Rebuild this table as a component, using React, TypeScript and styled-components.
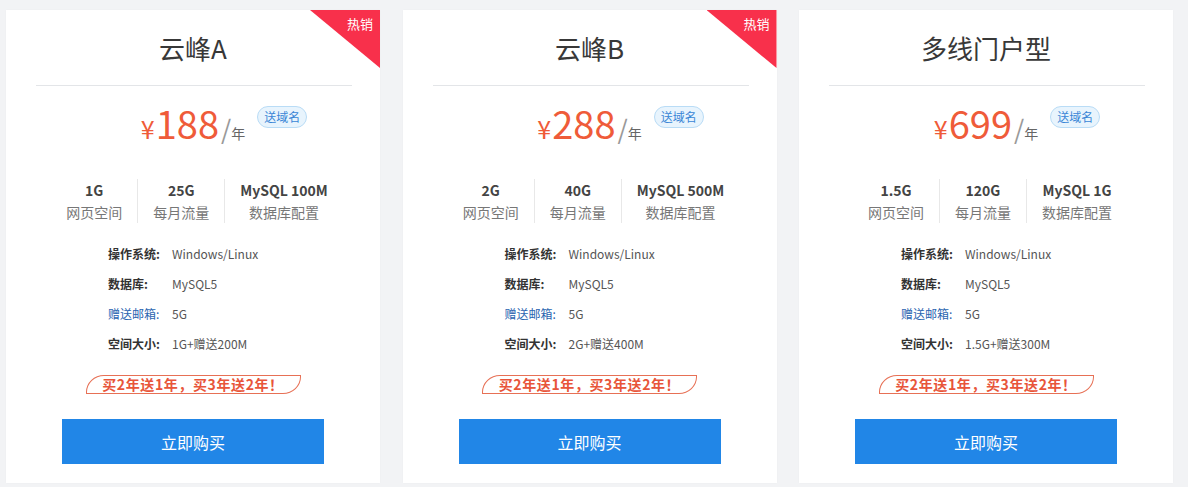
import React from 'react';
import styled, { createGlobalStyle } from 'styled-components';

type Plan = {
  name: string;
  price: string;
  hot?: boolean;
  stats: { value: string; label: string }[];
  specs: { label: string; value: string; highlight?: boolean }[];
};

const plans: Plan[] = [
  {
    name: '云峰A',
    price: '188',
    hot: true,
    stats: [
      { value: '1G', label: '网页空间' },
      { value: '25G', label: '每月流量' },
      { value: 'MySQL 100M', label: '数据库配置' },
    ],
    specs: [
      { label: '操作系统:', value: 'Windows/Linux' },
      { label: '数据库:', value: 'MySQL5' },
      { label: '赠送邮箱:', value: '5G', highlight: true },
      { label: '空间大小:', value: '1G+赠送200M' },
    ],
  },
  {
    name: '云峰B',
    price: '288',
    hot: true,
    stats: [
      { value: '2G', label: '网页空间' },
      { value: '40G', label: '每月流量' },
      { value: 'MySQL 500M', label: '数据库配置' },
    ],
    specs: [
      { label: '操作系统:', value: 'Windows/Linux' },
      { label: '数据库:', value: 'MySQL5' },
      { label: '赠送邮箱:', value: '5G', highlight: true },
      { label: '空间大小:', value: '2G+赠送400M' },
    ],
  },
  {
    name: '多线门户型',
    price: '699',
    stats: [
      { value: '1.5G', label: '网页空间' },
      { value: '120G', label: '每月流量' },
      { value: 'MySQL 1G', label: '数据库配置' },
    ],
    specs: [
      { label: '操作系统:', value: 'Windows/Linux' },
      { label: '数据库:', value: 'MySQL5' },
      { label: '赠送邮箱:', value: '5G', highlight: true },
      { label: '空间大小:', value: '1.5G+赠送300M' },
    ],
  },
];

const App = () => {
  return (
    <>
      <GlobalStyle />
      <StyledPage>
        {plans.map((plan) => (
          <StyledCard key={plan.name}>
            {plan.hot && (
              <StyledRibbon>
                <span>热销</span>
              </StyledRibbon>
            )}
            <StyledTitle>{plan.name}</StyledTitle>
            <StyledDivider />

            <StyledPriceRow>
              <StyledPrice>
                <StyledCurrency>¥</StyledCurrency>
                {plan.price}
                <StyledSlash>/</StyledSlash>
                <StyledUnit>年</StyledUnit>
                <StyledBadge>送域名</StyledBadge>
              </StyledPrice>
            </StyledPriceRow>

            <StyledStats>
              {plan.stats.map((s) => (
                <StyledStat key={s.label}>
                  <StyledStatValue>{s.value}</StyledStatValue>
                  <StyledStatLabel>{s.label}</StyledStatLabel>
                </StyledStat>
              ))}
            </StyledStats>

            <StyledSpecs>
              {plan.specs.map((spec) => (
                <StyledSpecRow key={spec.label}>
                  <StyledSpecLabel $highlight={spec.highlight}>{spec.label}</StyledSpecLabel>
                  <StyledSpecValue>{spec.value}</StyledSpecValue>
                </StyledSpecRow>
              ))}
            </StyledSpecs>

            <StyledPromoWrapper>
              <StyledPromo>买2年送1年，买3年送2年！</StyledPromo>
            </StyledPromoWrapper>

            <StyledBuyButton>立即购买</StyledBuyButton>
          </StyledCard>
        ))}
      </StyledPage>
    </>
  );
};

export default App;

const GlobalStyle = createGlobalStyle`
  html, body {
    margin: 0;
    padding: 0;
    background: #f2f3f5;
    font-family: "Noto Sans CJK SC", "Noto Sans", sans-serif;
  }
`;

const StyledPage = styled.div`
  display: grid;
  grid-template-columns: repeat(3, 374px);
  column-gap: 22.5px;
  padding: 10px 0 0 6px;
  height: 487px;
  box-sizing: border-box;
`;

const StyledCard = styled.div`
  position: relative;
  height: 473px;
  box-sizing: border-box;
  background: #fff;
  padding-top: 20px;
  overflow: hidden;
  box-shadow: 0 0 2px rgba(0, 0, 0, 0.03);
`;

const StyledRibbon = styled.div`
  position: absolute;
  top: 0;
  right: 0;
  width: 70px;
  height: 58px;
  background: #f8304b;
  clip-path: polygon(0 0, 100% 0, 100% 100%);

  span {
    position: absolute;
    top: 5px;
    right: 7px;
    font-size: 13px;
    line-height: 18px;
    color: #fff;
  }
`;

const StyledTitle = styled.h2`
  margin: 0;
  font-size: 26px;
  line-height: 36px;
  font-weight: 400;
  color: #383838;
  text-align: center;
`;

const StyledDivider = styled.div`
  height: 1px;
  background: #e3e5e8;
  margin: 19px 28px 0 30px;
`;

const StyledPriceRow = styled.div`
  display: flex;
  justify-content: center;
  margin-top: 15px;
`;

const StyledPrice = styled.div`
  position: relative;
  font-size: 38px;
  line-height: 44px;
  color: #ef5b39;
  white-space: nowrap;
`;

const StyledCurrency = styled.span`
  font-size: 25px;
  margin-right: 1px;
`;

const StyledSlash = styled.span`
  font-size: 26px;
  color: #999;
  margin-left: 2px;
`;

const StyledUnit = styled.span`
  font-size: 14px;
  color: #666;
`;

const StyledBadge = styled.span`
  position: absolute;
  left: calc(100% + 12px);
  top: 5px;
  height: 22px;
  padding: 0 6px;
  box-sizing: border-box;
  border: 1px solid #b9dcf6;
  border-radius: 11px;
  background: #e8f4fd;
  color: #3a86d6;
  font-size: 12px;
  line-height: 20px;
`;

const StyledStats = styled.div`
  display: flex;
  justify-content: center;
  margin-top: 24px;
  padding-left: 8px;
`;

const StyledStat = styled.div`
  display: flex;
  flex-direction: column;
  align-items: center;
  padding: 0 15px;

  & + & {
    border-left: 1px solid #e8e8e8;
  }
`;

const StyledStatValue = styled.div`
  font-size: 14px;
  line-height: 22px;
  font-weight: 700;
  color: #444;
  white-space: nowrap;
`;

const StyledStatLabel = styled.div`
  font-size: 14px;
  line-height: 22px;
  color: #777;
  white-space: nowrap;
`;

const StyledSpecs = styled.div`
  margin-top: 16px;
  padding-left: 102px;
`;

const StyledSpecRow = styled.div`
  display: flex;
  font-size: 12px;
  line-height: 30px;
`;

const StyledSpecLabel = styled.span<{ $highlight?: boolean }>`
  width: 64px;
  font-weight: ${({ $highlight }) => ($highlight ? 400 : 700)};
  color: ${({ $highlight }) => ($highlight ? '#2a64b0' : '#333')};
`;

const StyledSpecValue = styled.span`
  color: #555;
`;

const StyledPromoWrapper = styled.div`
  display: flex;
  justify-content: center;
  margin-top: 16px;
`;

const StyledPromo = styled.div`
  height: 19px;
  width: 215px;
  box-sizing: border-box;
  border: 1px solid #e77055;
  border-radius: 18px 0 18px 0 / 17px 0 17px 0;
  color: #e8553a;
  font-size: 14px;
  line-height: 17px;
  font-weight: 700;
  letter-spacing: 0.6px;
  text-align: center;
  white-space: nowrap;
`;

const StyledBuyButton = styled.button`
  display: block;
  width: 262px;
  height: 45px;
  margin: 25px auto 0;
  border: none;
  background: #2186e7;
  color: #fff;
  font-family: inherit;
  font-size: 16px;
  cursor: pointer;
`;
